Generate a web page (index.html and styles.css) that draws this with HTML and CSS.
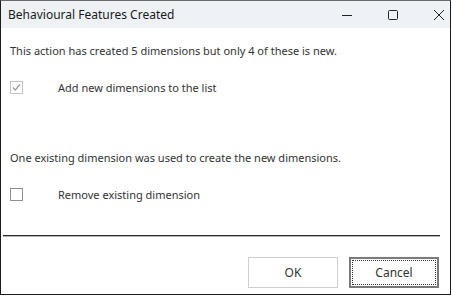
FILE: index.html
```html
<!DOCTYPE html>
<html lang="en">
<head>
    <meta charset="UTF-8">
    <title>Behavioural Features Created</title>
    <link rel="stylesheet" href="styles.css">
</head>
<body>
    <div class="window">
        <div class="titlebar">
            <span class="title">Behavioural Features Created</span>
            <div class="controls">
                <svg width="12" height="12" viewBox="0 0 12 12"><path d="M1 6.5h10" stroke="#222" stroke-width="1"/></svg>
                <svg width="12" height="12" viewBox="0 0 12 12"><rect x="1.5" y="1.5" width="9" height="9" rx="1" fill="none" stroke="#222" stroke-width="1"/></svg>
                <svg width="12" height="12" viewBox="0 0 12 12"><path d="M1 1l10 10M11 1L1 11" stroke="#222" stroke-width="1"/></svg>
            </div>
        </div>

        <div class="content">
            <p class="message first">This action has created 5 dimensions but only 4 of these is new.</p>
            <label class="option">
                <span class="box disabled">
                    <svg width="11" height="11" viewBox="0 0 11 11"><path d="M2 5.5l2.3 2.5L9 2.5" fill="none" stroke="#9a9a9a" stroke-width="1.2"/></svg>
                </span>
                <span class="option-label">Add new dimensions to the list</span>
            </label>

            <p class="message second">One existing dimension was used to create the new dimensions.</p>
            <label class="option">
                <span class="box"></span>
                <span class="option-label">Remove existing dimension</span>
            </label>
        </div>

        <div class="separator"></div>

        <div class="footer">
            <button class="btn">OK</button>
            <button class="btn default"><span class="focus">Cancel</span></button>
        </div>
    </div>
</body>
</html>
```

FILE: styles.css
```css
body {
    margin: 0;
    background: #ffffff;
    font-family: "Noto Sans", "Open Sans", sans-serif;
    font-size: 11px;
    color: #333;
}

.window {
    width: 451px;
    height: 295px;
    box-sizing: border-box;
    border: 1px solid #1c1c1c;
    border-top-color: #6a6a6a;
    display: flex;
    flex-direction: column;
    background: #fff;
}

.titlebar {
    height: 27px;
    background: #eef2f7;
    display: flex;
    align-items: center;
    justify-content: space-between;
    padding-left: 7px;
}

.title {
    font-size: 12px;
    color: #1a1a1a;
}

.controls {
    display: flex;
    align-items: center;
    gap: 34px;
    margin-right: 5px;
}

.content {
    padding: 0 9px;
    flex: 1;
}

.message {
    margin: 0;
    line-height: 16px;
}

.message.first {
    margin-top: 15px;
}

.message.second {
    margin-top: 55px;
}

.option {
    display: flex;
    align-items: center;
    margin-top: 21px;
    height: 15px;
}

.box {
    width: 11px;
    height: 11px;
    border: 1px solid #8f8f8f;
    background: #fff;
    display: flex;
    align-items: center;
    justify-content: center;
}

.box.disabled {
    border-color: #c4c4c4;
}

.option-label {
    margin-left: 35px;
}

.separator {
    margin: 0 10px 0 2px;
    height: 1px;
    background: #2b2b2b;
    border-bottom: 1px solid #b5b5b5;
}

.footer {
    display: flex;
    justify-content: flex-end;
    gap: 11px;
    padding: 20px 11px 6px 0;
}

.btn {
    width: 90px;
    height: 31px;
    font-family: "Noto Sans", "Open Sans", sans-serif;
    font-size: 12px;
    color: #333;
    background: #fff;
    border: 1px solid #cfcfcf;
    padding: 0;
}

.btn.default {
    border: 2px solid #7a7a7a;
    padding: 1px;
}

.btn.default .focus {
    display: flex;
    align-items: center;
    justify-content: center;
    height: 100%;
    box-sizing: border-box;
    border: 1px dotted #333;
}
```
